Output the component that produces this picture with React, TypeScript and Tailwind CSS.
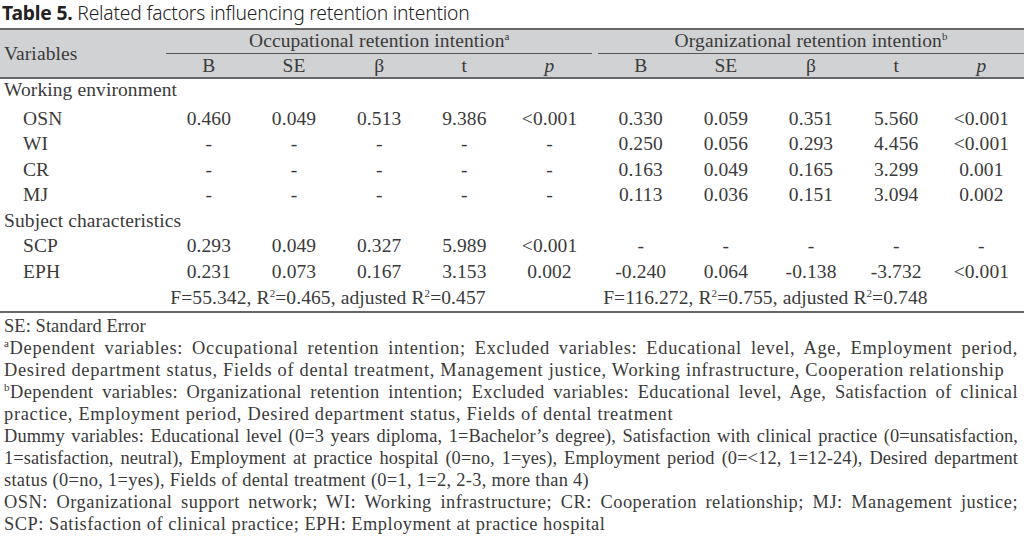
const occCols = ["B", "SE", "β", "t", "p"];

type Row = { label: string; group?: boolean; occ?: string[]; org?: string[] };

const rows: Row[] = [
  { label: "Working environment", group: true },
  { label: "OSN", occ: ["0.460", "0.049", "0.513", "9.386", "<0.001"], org: ["0.330", "0.059", "0.351", "5.560", "<0.001"] },
  { label: "WI", occ: ["-", "-", "-", "-", "-"], org: ["0.250", "0.056", "0.293", "4.456", "<0.001"] },
  { label: "CR", occ: ["-", "-", "-", "-", "-"], org: ["0.163", "0.049", "0.165", "3.299", "0.001"] },
  { label: "MJ", occ: ["-", "-", "-", "-", "-"], org: ["0.113", "0.036", "0.151", "3.094", "0.002"] },
  { label: "Subject characteristics", group: true },
  { label: "SCP", occ: ["0.293", "0.049", "0.327", "5.989", "<0.001"], org: ["-", "-", "-", "-", "-"] },
  { label: "EPH", occ: ["0.231", "0.073", "0.167", "3.153", "0.002"], org: ["-0.240", "0.064", "-0.138", "-3.732", "<0.001"] },
];

// full-width justified line (not the last of its paragraph)
const J = "[text-align-last:justify] text-justify whitespace-nowrap";

const Sup = ({ children }: { children: React.ReactNode }) => (
  <sup className="text-[11px] -top-[7px]">{children}</sup>
);

const HeadCell = ({ v }: { v: string }) => (
  <th className="font-normal text-center">{v === "p" ? <i>p</i> : v}</th>
);

export default function App() {
  return (
    <div className="w-[1024px] h-[542px] overflow-hidden bg-white text-[#3a3a3a] font-['Liberation_Serif',serif] text-[19.5px] tracking-[0.1px]">
      <h1 className="h-[28px] pl-[2px] leading-[26.4px] text-[19.3px] tracking-[-0.2px] text-[#222] font-['Noto_Sans',sans-serif]">
        <span className="font-bold">Table 5.</span> <span className="font-light">Related factors influencing retention intention</span>
      </h1>

      <table className="w-full table-fixed border-collapse">
        <colgroup>
          <col className="w-[166px]" />
          {[0, 1, 2, 3, 4].map((i) => (
            <col key={"a" + i} className="w-[85px]" />
          ))}
          <col className="w-[6px]" />
          {[0, 1, 2, 3, 4].map((i) => (
            <col key={"b" + i} className="w-[85px]" />
          ))}
        </colgroup>
        <thead className="bg-[#d1d2d4]">
          <tr className="h-[25px] border-t-2 border-[#666]">
            <th rowSpan={2} className="font-normal text-left pl-[4px] border-b-2 border-[#666]">Variables</th>
            <th colSpan={5} className="font-normal p-0 align-bottom">
              <div className="border-b-[1.5px] border-[#555] leading-[20px] pb-[2px]">
                Occupational retention intention<Sup>a</Sup>
              </div>
            </th>
            <th />
            <th colSpan={5} className="font-normal p-0 align-bottom">
              <div className="border-b-[1.5px] border-[#555] leading-[20px] pb-[2px]">
                Organizational retention intention<Sup>b</Sup>
              </div>
            </th>
          </tr>
          <tr className="h-[24px] leading-[22px] border-b-2 border-[#666]">
            {occCols.map((c) => (
              <HeadCell key={"o" + c} v={c} />
            ))}
            <th />
            {occCols.map((c) => (
              <HeadCell key={"r" + c} v={c} />
            ))}
          </tr>
        </thead>
        <tbody>
          {rows.map((r, idx) => (
            <tr key={r.label} className={(idx === 0 ? "h-[28px]" : "h-[25.5px]") + " leading-[22px]"}>
              {r.group ? (
                <td colSpan={12} className={"pl-[4px] " + (idx === 0 ? "align-top" : "")}>{r.label}</td>
              ) : (
                <>
                  <td className="pl-[23px]">{r.label}</td>
                  {r.occ!.map((v, i) => (
                    <td key={"o" + i} className="text-center">{v}</td>
                  ))}
                  <td />
                  {r.org!.map((v, i) => (
                    <td key={"r" + i} className="text-center">{v}</td>
                  ))}
                </>
              )}
            </tr>
          ))}
          <tr className="h-[27px] leading-[22px] border-b-2 border-[#666]">
            <td />
            <td colSpan={5} className="pl-[4px]">
              F=55.342, R<Sup>2</Sup>=0.465, adjusted R<Sup>2</Sup>=0.457
            </td>
            <td />
            <td colSpan={5} className="pl-[5px]">
              F=116.272, R<Sup>2</Sup>=0.755, adjusted R<Sup>2</Sup>=0.748
            </td>
          </tr>
        </tbody>
      </table>

      <div className="pt-[2px] pl-[4px] pr-[6px] leading-[22px] text-[18.4px]">
        <p>SE: Standard Error</p>
        <p className={J + " tracking-[0.7px]"}>
          <Sup>a</Sup>Dependent variables: Occupational retention intention; Excluded variables: Educational level, Age, Employment period,
        </p>
        <p className="tracking-[0.7px]">Desired department status, Fields of dental treatment, Management justice, Working infrastructure, Cooperation relationship</p>
        <p className={J + " tracking-[0.45px]"}>
          <Sup>b</Sup>Dependent variables: Organizational retention intention; Excluded variables: Educational level, Age, Satisfaction of clinical
        </p>
        <p className="tracking-[0.7px]">practice, Employment period, Desired department status, Fields of dental treatment</p>
        <p className={J + " tracking-[0.1px]"}>
          Dummy variables: Educational level (0=3 years diploma, 1=Bachelor’s degree), Satisfaction with clinical practice (0=unsatisfaction,
        </p>
        <p className={J + " tracking-[0.1px]"}>
          1=satisfaction, neutral), Employment at practice hospital (0=no, 1=yes), Employment period (0=&lt;12, 1=12-24), Desired department
        </p>
        <p className="tracking-[0.3px]">status (0=no, 1=yes), Fields of dental treatment (0=1, 1=2, 2-3, more than 4)</p>
        <p className={J + " tracking-[0.5px]"}>
          OSN: Organizational support network; WI: Working infrastructure; CR: Cooperation relationship; MJ: Management justice;
        </p>
        <p className="tracking-[0.5px]">SCP: Satisfaction of clinical practice; EPH: Employment at practice hospital</p>
      </div>
    </div>
  );
}
